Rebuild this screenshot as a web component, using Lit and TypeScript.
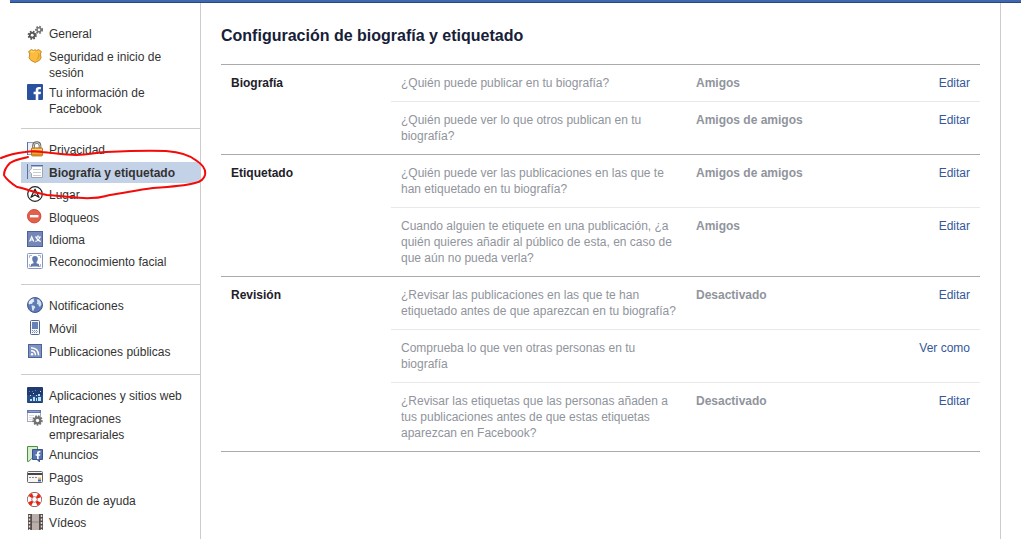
import { LitElement, html, css, svg, SVGTemplateResult } from "lit";
import { customElement, property } from "lit/decorators.js";
import { classMap } from "lit/directives/class-map.js";

const gear = (cx: number, cy: number, r: number, color: string, hole: string) => svg`
  <circle cx=${cx} cy=${cy} r=${r} fill="none" stroke=${color} stroke-width="2.4" stroke-dasharray="1.5 1.2"/>
  <circle cx=${cx} cy=${cy} r=${r - 0.1} fill=${color}/>
  <circle cx=${cx} cy=${cy} r=${r * 0.42} fill=${hole}/>`;

const icons: Record<string, SVGTemplateResult> = {
  general: svg`${gear(5.2, 10.2, 3.4, "#585858", "#fff")}${gear(12, 4.8, 2.9, "#777", "#fff")}`,
  security: svg`
    <path d="M4.5 1.5 6.5 2.6 8 1.7 9.6 2.6 11.5 1.5 14.4 3.6 13.3 6 14.1 9.8Q13.7 12.6 8.1 14.4 2.6 12.6 2.1 9.8L2.8 6 1.6 3.6Z" fill="#fcbd3f" stroke="#c58a2b"/>
    <path d="M12.2 5.6Q13.8 10.6 8.4 12.3 12 9.5 11 5Z" fill="#e39f2f"/>
    <path d="M4 3.6 6.5 4 8 3.3" stroke="#ffdf8a" fill="none"/>`,
  facebook: svg`
    <rect width="16" height="16" rx="1" fill="#2a50a0"/>
    <path d="M8.7 16V10.2H6.6V7.7h2.1V6.2C8.7 4 9.9 2.9 11.9 2.9h2v2.3h-1.3c-1 0-1.3.5-1.3 1.2v1.3H14l-.4 2.5h-2.3V16Z" fill="#fff"/>`,
  privacy: svg`
    <path d="M.5 1.5h6v12h-6Z" fill="#eef1f8" stroke="#8b9dc3"/>
    <path d="M.5 1v13" stroke="#5670a6"/>
    <path d="M6.5 8V4.5Q6.7 1.5 9.8 1.5T13 4.5V8" fill="none" stroke="#666" stroke-width="2.6"/>
    <path d="M6.5 8V4.6Q6.8 1.6 9.8 1.6T13 4.6V8" fill="none" stroke="#d5d5d5"/>
    <rect x="4.5" y="6.9" width="11" height="8" rx="1" fill="#f2a734" stroke="#b8741d"/>
    <path d="M5 8.5h10" stroke="#ffdb83"/><path d="M5 11.5h10M5 13.5h10" stroke="#d98a25"/>`,
  timeline: svg`
    <path d="M.5 0v15" stroke="#5670a6"/>
    <path d="M4.5 1.5h11v12h-11V9.700L2 7.200 4.500 4.700Z" fill="#fff" stroke="#a1a6af"/>
    <path d="M4 1.500h12" stroke="#5670a6"/><path d="M5 2.500h10" stroke="#a9b8d6"/>
    <path d="M6 5.500h8M6 8.500h8M6 11.500h8" stroke="#c9ccd2"/>`,
  place: svg`
    <circle cx="8" cy="8" r="7.3" fill="#fff" stroke="#222" stroke-width="1.2"/>
    <path d="M8 3.200 12 11.300 8 9 4 11.300Z" fill="#fff" stroke="#222" stroke-width="1.300" stroke-linejoin="round"/>
    <path d="M8 9V6.500" stroke="#555" stroke-width=".8"/>`,
  block: svg`
    <circle cx="7.2" cy="7.2" r="6.7" fill="#e2604c" stroke="#cc4a3a"/>
    <rect x="3" y="6" width="8.4" height="2.4" fill="#fff"/>`,
  language: svg`
    <rect x=".5" y=".5" width="15" height="15" fill="#7487b6" stroke="#4a629f"/>
    <path d="M2.6 10.500 4.700 5.700 6.800 10.500M3.500 9h2.400" fill="none" stroke="#fff" stroke-width="1.200"/>
    <path d="M8 6h6M11 4.300V6M8.300 10.600Q12.200 9.200 12.800 6M9.200 6Q10 9.200 13.800 10.600" fill="none" stroke="#fff" stroke-width="1.100"/>`,
  face: svg`
    <rect x=".5" y=".5" width="15" height="15" rx="1" fill="#fff" stroke="#8495bf"/>
    <path d="M2.500 5V2.500H5M11 2.500h2.500V5M2.500 11v2.500H5M11 13.500h2.500V11" fill="none" stroke="#a9b6d4"/>
    <path d="M8 3c2 0 2.900 1.300 2.800 3-.1 1.500-.6 2.400-1.300 3v1.200l2.300.9.700 2.400h-9l.7-2.400 2.300-.9V9C5.800 8.400 5.300 7.500 5.200 6 5.100 4.300 6 3 8 3Z" fill="#6078ab"/>`,
  globe: svg`
    <circle cx="8" cy="8" r="7.500" fill="#5f7bb3" stroke="#3e5a95"/>
    <path d="M1.800 4.600 4.600 2 7.400 1.600 6.500 3 7.600 4.200 5.800 5.300 5 7 3.700 6.800 2.800 7.600 1.700 7Z" fill="#e6edf8"/>
    <path d="M4.500 8.300 7.200 8.800 8.300 10.200 7 12 6.300 14.200 5.200 13.300 4.900 10.800Z" fill="#dbe4f4"/>
    <path d="M9.800 2.200 12 2.600 14 5 14.500 7.500 13.200 9.800 11.800 9.300 11.500 7.600 9.800 7 10.300 5Z" fill="#d3def0"/>`,
  mobile: svg`
    <rect x="3.500" y=".500" width="9" height="14" rx="1" fill="#f5f7fb" stroke="#52648f"/>
    <rect x="5" y="2" width="6" height="7" fill="#6682b8"/>
    <path d="M5 10.500h6M5 12.500h6" stroke="#7a8bae" stroke-dasharray="1 1"/>
    <path d="M6 11.500h5" stroke="#a7b3cc" stroke-dasharray="1 1"/>`,
  feed: svg`
    <rect x="1.500" y="1.500" width="13" height="13" fill="#8093be" stroke="#4a629f"/>
    <circle cx="5" cy="11.300" r="1.200" fill="#fff"/>
    <path d="M4 7.800Q8.400 7.900 8.500 12.300M4 4.700Q11.500 5 11.600 12.300" fill="none" stroke="#fff" stroke-width="1.400"/>`,
  apps: svg`
    <rect width="16" height="16" rx="1" fill="#1f3b6f"/>
    <path d="M0 8h16v7H0Z" fill="#27508a"/>
    <path d="M3 12h2v2H3ZM6 10h2v4H6ZM9 11h1v3H9ZM11 7h2v2h-2ZM11 10h3v4h-3ZM3 8h1v1H3ZM6 6h1v1H6ZM9 8h1v1H9ZM13 4h1v1h-1Z" fill="#b9e2f5"/>
    <path d="M2 4h1v1H2ZM8 3h1v1H8ZM5 4h1v1H5Z" fill="#5b86bd"/>`,
  business: svg`
    <rect x=".500" y=".500" width="13" height="11" fill="#fff" stroke="#a3a9b5"/>
    <path d="M0 1.500h14" stroke="#5f79b0" stroke-width="3"/>
    <path d="M1.500 1.500h11" stroke="#8fa3cd"/>
    <path d="M2 5.500h5M2 7.500h4M2 9.500h4" stroke="#d8dade"/>
    ${gear(10.5, 10.5, 4, "#707070", "#fff")}`,
  ads: svg`
    <path d="M.5.5h10v12H4.800L2 15.200.5 15.500Z" fill="#d8ecd0" stroke="#4c9143"/>
    <path d="M5.500 3.500h10v10h-3v2.300L10 13.500H5.500Z" fill="#5873ae" stroke="#36528f"/>
    <path d="M10 13V9.800H8.600V8.200H10V7.100c0-1.400.8-2.200 2.100-2.200h1.300v1.600h-.8c-.7 0-.9.300-.9.800v.9h1.700l-.3 1.600h-1.400V13Z" fill="#fff"/>`,
  payments: svg`
    <rect x=".5" y="2.500" width="15" height="11" rx="1" fill="#f6f6f6" stroke="#666"/>
    <path d="M1 5h14" stroke="#444" stroke-width="2"/>
    <path d="M2 8.500h9" stroke="#888" stroke-dasharray="2 1"/>
    <path d="M11 9.500h3" stroke="#f0b53e" stroke-width="2"/><path d="M11 11.500h3" stroke="#3c65b5" stroke-width="2"/>`,
  support: svg`
    <circle cx="7.500" cy="7.500" r="4.900" fill="none" stroke="#7d3a33" stroke-width="5"/>
    <circle cx="7.500" cy="7.500" r="4.900" fill="none" stroke="#fff" stroke-width="3.800"/>
    <circle cx="7.500" cy="7.500" r="4.900" fill="none" stroke="#f0200f" stroke-width="3.800" stroke-dasharray="3.200 4.497" transform="rotate(26 7.500 7.500)"/>`,
  videos: svg`
    <rect x="1" width="15" height="16" fill="#554b48"/>
    <path d="M5 0h7v7H5ZM5 9h7v7H5Z" fill="#b9aeaa"/>
    <path d="M5 8h7" stroke="#efebe9"/>
    <path d="M2.500 1v15M14.500 1v15" stroke="#e2dcd9" stroke-width="1.500" stroke-dasharray="2 1.500"/>`,
};

interface NavItem {
  icon: string;
  label: string;
  compact?: boolean;
  current?: boolean;
}

const navGroups: NavItem[][] = [
  [
    { icon: "general", label: "General" },
    { icon: "security", label: "Seguridad e inicio de sesión" },
    { icon: "facebook", label: "Tu información de Facebook" },
  ],
  [
    { icon: "privacy", label: "Privacidad" },
    { icon: "timeline", label: "Biografía y etiquetado", compact: true, current: true },
    { icon: "place", label: "Lugar" },
    { icon: "block", label: "Bloqueos", compact: true },
    { icon: "language", label: "Idioma", compact: true },
    { icon: "face", label: "Reconocimiento facial" },
  ],
  [
    { icon: "globe", label: "Notificaciones" },
    { icon: "mobile", label: "Móvil" },
    { icon: "feed", label: "Publicaciones públicas" },
  ],
  [
    { icon: "apps", label: "Aplicaciones y sitios web" },
    { icon: "business", label: "Integraciones empresariales" },
    { icon: "ads", label: "Anuncios" },
    { icon: "payments", label: "Pagos" },
    { icon: "support", label: "Buzón de ayuda", compact: true },
    { icon: "videos", label: "Vídeos" },
  ],
];

interface Setting {
  question: string;
  value: string;
  action: string;
}

const sections: { title: string; rows: Setting[] }[] = [
  {
    title: "Biografía",
    rows: [
      { question: "¿Quién puede publicar en tu biografía?", value: "Amigos", action: "Editar" },
      { question: "¿Quién puede ver lo que otros publican en tu biografía?", value: "Amigos de amigos", action: "Editar" },
    ],
  },
  {
    title: "Etiquetado",
    rows: [
      { question: "¿Quién puede ver las publicaciones en las que te han etiquetado en tu biografía?", value: "Amigos de amigos", action: "Editar" },
      { question: "Cuando alguien te etiquete en una publicación, ¿a quién quieres añadir al público de esta, en caso de que aún no pueda verla?", value: "Amigos", action: "Editar" },
    ],
  },
  {
    title: "Revisión",
    rows: [
      { question: "¿Revisar las publicaciones en las que te han etiquetado antes de que aparezcan en tu biografía?", value: "Desactivado", action: "Editar" },
      { question: "Comprueba lo que ven otras personas en tu biografía", value: "", action: "Ver como" },
      { question: "¿Revisar las etiquetas que las personas añaden a tus publicaciones antes de que estas etiquetas aparezcan en Facebook?", value: "Desactivado", action: "Editar" },
    ],
  },
];

@customElement("settings-nav")
export class SettingsNav extends LitElement {
  @property({ attribute: false }) groups: NavItem[][] = [];

  static styles = css`
    :host { display: block; }
    .nav { padding-top: 10px; }
    .group { list-style: none; margin: 0; padding: 10px 0; }
    .group + .group { border-top: 1px solid #ccc; }
    .item { position: relative; min-height: 23px; }
    .item.compact { min-height: 22px; }
    .link {
      display: flex;
      gap: 6px;
      padding: 2px 5px 1px 6px;
      color: #333;
      line-height: 16px;
      text-decoration: none;
    }
    .icon { flex: none; width: 16px; height: 16px; }
    .label { padding-top: 1px; }
    .current .link { background: #c4d2e7; font-weight: bold; padding-bottom: 2px; }
    .marker {
      position: absolute;
      left: -21px;
      top: -17px;
      width: 210px;
      height: 56px;
      pointer-events: none;
      z-index: 1;
    }
  `;

  render() {
    return html`<nav class="nav" aria-label="Configuración">
      ${this.groups.map((group) => html`<ul class="group">
        ${group.map((item) => html`<li class=${classMap({ item: true, compact: !!item.compact, current: !!item.current })}>
          <a class="link" href="#"><svg class="icon" viewBox="0 0 16 16" aria-hidden="true">${icons[item.icon]}</svg><span class="label">${item.label}</span></a>
          ${item.current ? html`<svg class="marker" viewBox="0 0 210 56" aria-hidden="true">
            <path d="M1 13C8 10 16 8 25 7C31 6 36 6 42 7C54 8 64 10 76 10C90 10 92 8 106 7C126 6 146 5 166 6C180 7 190 10 197 16C203 20 206 25 205 30C204 34 200 37 195 38C184 41 169 42 153 43C137 45 124 48 110 50C104 51 101 53 91 53C80 54 66 51 47 50C35 48 27 44 17 42C12 39 5 33 4 30C4 26 7 21 10 18C14 15 20 14 28 12" fill="none" stroke="#f50a0a" stroke-width="2" stroke-linecap="round"/>
          </svg>` : null}
        </li>`)}
      </ul>`)}
    </nav>`;
  }
}

@customElement("settings-table")
export class SettingsTable extends LitElement {
  static styles = css`
    :host { display: block; }
    .table {
      width: 100%;
      table-layout: fixed;
      border-collapse: separate;
      border-spacing: 0;
      border-bottom: 1px solid #aaa;
      line-height: 16px;
    }
    .col-title { width: 170px; }
    .col-question { width: 295px; }
    .col-action { width: 90px; }
    .cell { padding: 10px; border-top: 1px solid #e9e9e9; vertical-align: top; text-align: left; color: #90949c; }
    .first .cell { border-top-color: #aaa; }
    .title { color: #1d2129; font-weight: bold; }
    .question { padding-right: 8px; }
    .value { font-weight: bold; }
    .action { text-align: right; }
    .edit { color: #365899; text-decoration: none; }
  `;

  render() {
    return html`<table class="table">
      <colgroup><col class="col-title"><col class="col-question"><col><col class="col-action"></colgroup>
      ${sections.map((section) => html`<tbody>
        ${section.rows.map((row, i) => html`<tr class=${classMap({ first: i === 0 })}>
          ${i === 0 ? html`<th class="cell title" scope="rowgroup" rowspan=${section.rows.length}>${section.title}</th>` : null}
          <td class="cell question">${row.question}</td>
          <td class="cell value">${row.value}</td>
          <td class="cell action"><a class="edit" href="#">${row.action}</a></td>
        </tr>`)}
      </tbody>`)}
    </table>`;
  }
}

@customElement("app-root")
export class AppRoot extends LitElement {
  static styles = css`
    :host {
      display: flex;
      flex-direction: column;
      height: 100vh;
      overflow: hidden;
      background: #fff;
      font: 12px/16px "Liberation Sans", Arial, sans-serif;
    }
    .topbar { flex: none; height: 2px; margin-left: 10px; background: #4267b2; border-bottom: 1px solid #29487d; }
    .page { flex: 1; min-height: 0; display: flex; padding: 0 20px 0 21px; }
    .side { flex: none; width: 179px; border-right: 1px solid #ccc; }
    .main { flex: 1; min-width: 0; padding: 23px 20px; border-right: 1px solid #ccc; }
    .heading { margin: 0 0 18px; font-size: 16px; line-height: 20px; color: #162038; }
  `;

  render() {
    return html`
      <header class="topbar"></header>
      <div class="page">
        <settings-nav class="side" .groups=${navGroups}></settings-nav>
        <main class="main">
          <h1 class="heading">Configuración de biografía y etiquetado</h1>
          <settings-table></settings-table>
        </main>
      </div>`;
  }
}
